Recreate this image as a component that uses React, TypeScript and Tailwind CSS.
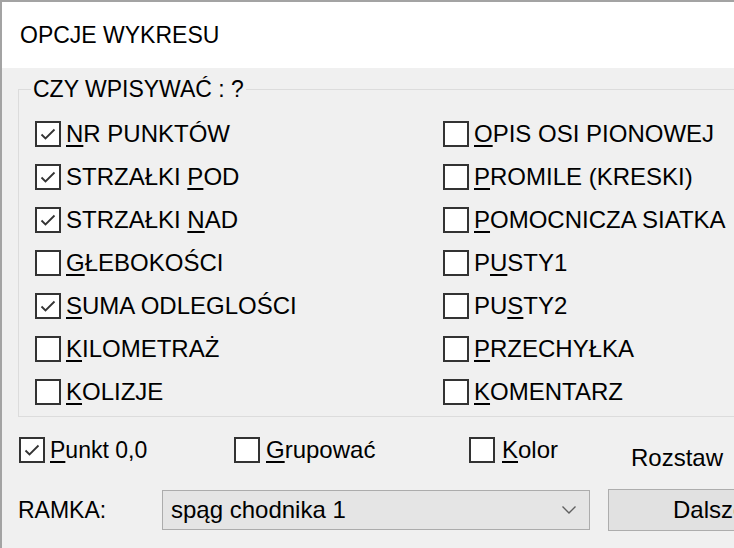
import React from 'react';

type Opt = { label: string; key: number; checked?: boolean };

const leftOpts: Opt[] = [
  { label: 'NR PUNKTÓW', key: 0, checked: true },
  { label: 'STRZAŁKI POD', key: 9, checked: true },
  { label: 'STRZAŁKI NAD', key: 9, checked: true },
  { label: 'GŁEBOKOŚCI', key: 0 },
  { label: 'SUMA ODLEGLOŚCI', key: 0, checked: true },
  { label: 'KILOMETRAŻ', key: 0 },
  { label: 'KOLIZJE', key: 0 },
];

const rightOpts: Opt[] = [
  { label: 'OPIS OSI PIONOWEJ', key: 0 },
  { label: 'PROMILE (KRESKI)', key: 0 },
  { label: 'POMOCNICZA SIATKA', key: 0 },
  { label: 'PUSTY1', key: 1 },
  { label: 'PUSTY2', key: 2 },
  { label: 'PRZECHYŁKA', key: 0 },
  { label: 'KOMENTARZ', key: 0 },
];

const Box: React.FC<{ checked?: boolean }> = ({ checked }) => (
  <span className="w-[26px] h-[26px] shrink-0 border-2 border-[#333333] bg-white flex items-center justify-center">
    {checked && (
      <svg width="22" height="22" viewBox="0 0 22 22" fill="none">
        <path d="M4.5 11.5 L8.5 15.5 L17.5 6.5" stroke="#333333" strokeWidth="1.8" />
      </svg>
    )}
  </span>
);

// label with one underlined access key
const Accel: React.FC<{ text: string; at: number }> = ({ text, at }) => (
  <span className="whitespace-nowrap">
    {text.slice(0, at)}
    <u className="underline decoration-[1.5px] underline-offset-[3px]">{text.charAt(at)}</u>
    {text.slice(at + 1)}
  </span>
);

const Row: React.FC<{ opt: Opt }> = ({ opt }) => (
  <div className="h-[43px] flex items-center gap-[5px]">
    <Box checked={opt.checked} />
    <Accel text={opt.label} at={opt.key} />
  </div>
);

const App: React.FC = () => {
  return (
    <div
      className="w-[734px] h-[548px] overflow-hidden bg-[#f0f0f0] border-t-2 border-l-2 border-[#a3a3a3] flex flex-col text-black"
      style={{ fontFamily: '"Liberation Sans", Arial, sans-serif' }}
    >
      {/* Title */}
      <div className="h-[66px] shrink-0 bg-white flex items-center pl-[18px] text-[23px]">OPCJE WYKRESU</div>

      <div className="flex-1 pl-[16px] pt-[8px]">
        {/* Group box */}
        <fieldset className="w-[740px] border border-[#dcdcdc] pl-[16px] pt-[10px] pb-[3px]">
          <legend className="ml-[-4px] px-[2px] text-[23px] leading-[26px]">CZY WPISYWAĆ : ?</legend>
          <div className="grid grid-cols-[408px_1fr] text-[24px]">
            <div className="flex flex-col">
              {leftOpts.map((o) => (
                <Row key={o.label} opt={o} />
              ))}
            </div>
            <div className="flex flex-col">
              {rightOpts.map((o) => (
                <Row key={o.label} opt={o} />
              ))}
            </div>
          </div>
        </fieldset>

        {/* Bottom options */}
        <div className="mt-[13px] h-[40px] flex items-center text-[24px]">
          <div className="w-[216px] shrink-0 pl-[1px] flex items-center gap-[5px] text-[23px]">
            <Box checked />
            <Accel text="Punkt 0,0" at={0} />
          </div>
          <div className="w-[235px] shrink-0 flex items-center gap-[6px]">
            <Box />
            <Accel text="Grupować" at={0} />
          </div>
          <div className="w-[162px] shrink-0 flex items-center gap-[7px]">
            <Box />
            <Accel text="Kolor" at={0} />
          </div>
          <div className="mt-[16px] shrink-0">Rozstaw</div>
        </div>

        {/* Frame select */}
        <div className="mt-[19px] h-[42px] flex items-center">
          <div className="w-[144px] shrink-0 text-[23px]">RAMKA:</div>
          <div className="w-[428px] shrink-0 h-[40px] bg-[#e5e5e5] border border-[#acacac] flex items-center pl-[8px] pr-[12px] text-[24px]">
            <span className="flex-1">spąg chodnika 1</span>
            <svg width="16" height="10" viewBox="0 0 16 10" fill="none">
              <path d="M1.5 1.5 L8 8 L14.5 1.5" stroke="#606060" strokeWidth="1.4" />
            </svg>
          </div>
          <div className="ml-[18px] w-[160px] shrink-0 h-[42px] bg-[#e1e1e1] border border-[#adadad] flex items-center pl-[64px] text-[24px]">
            Dalsze
          </div>
        </div>
      </div>
    </div>
  );
};

export default App;
